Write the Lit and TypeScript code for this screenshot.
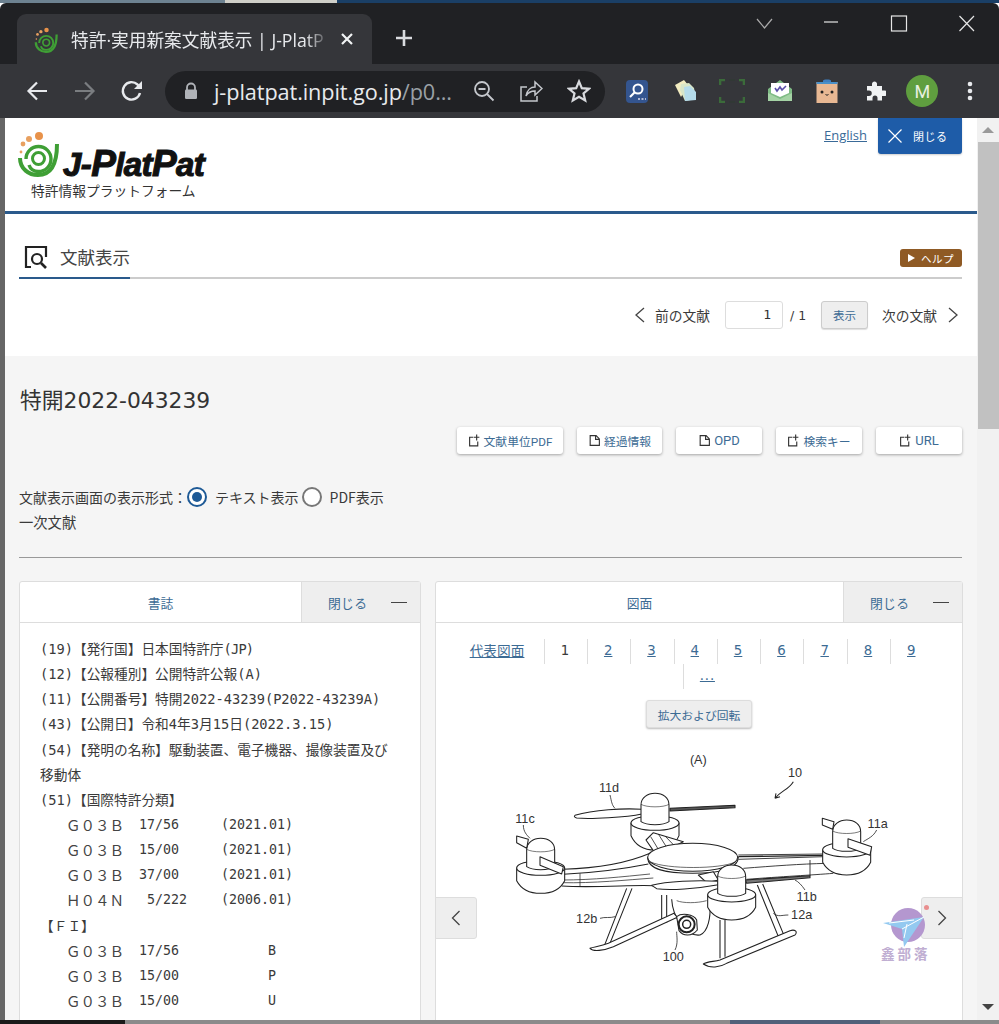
import { LitElement, html, css, svg } from "lit";
import { customElement } from "lit/decorators.js";

const spiral = () => html`<svg viewBox="0 0 42 48" width="100%" height="100%">
  <circle cx="21" cy="7" r="4" fill="#e8924a"/><circle cx="11" cy="10" r="3" fill="#e8a060"/>
  <circle cx="5" cy="15" r="2.4" fill="#e8a060"/><circle cx="3" cy="23" r="1.4" fill="#e8a060"/>
  <g fill="none" stroke="#3f9f35">
    <path d="M2 29C2 40 11 46 20 46C31 46 39 38 39 15" stroke-width="4"/>
    <path d="M8 30a12.5 12.5 0 1 1 12.500 12.500C15 42.500 12 39 11 36" stroke-width="3.400"/>
    <circle cx="20.500" cy="29.500" r="6" stroke-width="3"/>
  </g></svg>`;

const motor = (x: number, y: number, h = 120) => svg`<g transform="translate(${x} ${y})" fill="#fff" stroke="#222" stroke-width="3.200">
  <path d="M-72 44V82C-55 ${h - 6} -25 ${h} 0 ${h}C28 ${h} 58 ${h - 10} 72 82V44Z"/>
  <ellipse cx="0" cy="44" rx="72" ry="22"/>
  <path d="M-42 -10C-42 -32 -22 -45 0 -45C24 -45 42 -32 42 -10V40C25 52 -25 52 -42 40Z"/>
  <path d="M-42 -12C-25 -2 25 -2 42 -12" fill="none" stroke-width="1.800"/>
</g>`;

const drone = () => html`<svg class="drone" viewBox="0 0 1260 720" width="420" height="240">
  <g fill="none" stroke="#222" stroke-width="3.200" stroke-linejoin="round">
    <path d="M285 226C340 210 430 204 485 208V222C440 232 330 238 290 234C282 232 282 228 285 226Z" fill="#fff"/>
    <path d="M570 205L765 196V203L570 213Z" fill="#555"/>
    ${motor(525, 205, 125)}
    <path d="M498 300L520 278L610 305L560 330L520 332Z" fill="#fff"/>
    <path d="M512 290L535 328M535 282L560 322M555 288L582 316" stroke-width="2.400"/>
    <path d="M250 388C350 385 440 370 510 340M250 403C350 398 440 385 505 372M245 438C350 445 480 432 530 438" fill="#fff"/>
    <path d="M245 420C340 420 430 410 510 402M245 428C340 430 440 420 520 414M300 400V440" stroke-width="2.200"/>
    <path d="M775 345L1032 342M775 358L1032 350M800 418C900 410 1000 405 1060 400M990 360V408M790 385C880 378 960 372 1040 370" stroke-width="2.600"/>
    <path d="M775 350L1032 346" stroke-width="4"/>
    <path d="M503 352C503 390 560 400 638 400C720 400 775 385 775 352Z" fill="#fff"/>
    <ellipse cx="638" cy="352" rx="135" ry="42" fill="#fff"/>
    <path d="M512 366C560 388 720 388 766 366" stroke-width="2"/>
    <path d="M795 420L990 407V413L800 430Z" fill="#777"/>
    <path d="M655 405L700 395L715 420L680 428Z" fill="#fff"/>
    <path d="M545 465V552M560 465V548" />
    <path d="M575 478C578 530 615 590 660 585C685 575 692 530 690 495" fill="#fff"/>
    <path d="M590 482C610 490 650 490 680 482" stroke-width="2"/>
    <path d="M440 445L370 625M456 445L386 620" />
    <path d="M330 625C340 636 370 632 400 620L592 532L582 520L385 610C360 620 340 620 330 625Z" fill="#fff"/>
    <path d="M590 530C605 518 640 522 650 540L652 570C635 590 610 590 597 572Z" fill="#fff"/>
    <circle cx="620" cy="553" r="24" stroke-width="6" fill="#fff"/>
    <circle cx="620" cy="553" r="12" stroke-width="4.500"/>
    <path d="M832 435L900 602M848 432L916 596" />
    <path d="M720 540V655M735 540V650" />
    <path d="M670 672C690 686 720 682 740 670L945 585C954 575 945 567 930 572L720 660C700 665 680 665 670 672Z" fill="#fff"/>
    <path d="M515 436C560 424 650 420 715 424V434C650 446 570 452 530 446Z" fill="#fff"/>
    ${motor(182, 340)}
    <path d="M180 350L250 380L245 402L180 376Z" fill="#fff"/>
    <path d="M110 288L145 298L140 325L110 308Z" fill="#fff"/>
    ${motor(1100, 285)}
    <path d="M1104 296L1175 320L1170 346L1104 322Z" fill="#fff"/>
    <path d="M1027 235L1062 245L1058 268L1027 255Z" fill="#fff"/>
    ${motor(755, 420)}
    <path d="M940 125C925 150 905 150 885 175M885 175L888 160M885 175L900 170" />
    <path d="M390 165C395 185 395 195 405 205M130 255C130 275 140 285 150 295M1190 270C1180 290 1165 295 1150 305M975 450C965 435 955 425 945 420M925 525C905 525 895 532 880 520M360 535C375 530 390 535 405 530M585 630C595 610 590 590 590 575" stroke-width="2.400"/>
  </g>
  <g class="dl" font-size="38" fill="#333" text-anchor="middle">
    <text x="655" y="72">(A)</text><text x="945" y="112">10</text><text x="387" y="157">11d</text>
    <text x="135" y="249">11c</text><text x="1193" y="264">11a</text><text x="980" y="484">11b</text>
    <text x="320" y="550">12b</text><text x="965" y="537">12a</text><text x="580" y="664">100</text>
  </g></svg>`;

const docIcon = () => html`<svg viewBox="0 0 12 12" width="13" height="13"><path d="M2 1.500H7.500L10.500 4.500V10.500H2ZM7 1.500V5H10.500" fill="none" stroke="#333" stroke-width="1.050"/></svg>`;
const extIcon = () => html`<svg viewBox="0 0 12 12" width="13" height="13"><path d="M5 3H1.500V11H9V7M8 .5V6M5.500 3H10.500" fill="none" stroke="#333" stroke-width="1.050"/></svg>`;

const cls = [["Ｇ０３Ｂ", "17/56", "(2021.01)"], ["Ｇ０３Ｂ", "15/00", "(2021.01)"], ["Ｇ０３Ｂ", "37/00", "(2021.01)"], ["Ｈ０４Ｎ", " 5/222", "(2006.01)"]];
const fi = [["Ｇ０３Ｂ", "17/56", "B"], ["Ｇ０３Ｂ", "15/00", "P"], ["Ｇ０３Ｂ", "15/00", "U"]];

@customElement("app-root")
export class AppRoot extends LitElement {
  static styles = css`
    :host { display: block; width: 999px; height: 1024px; overflow: hidden; position: relative; font-family: "Noto Sans CJK JP", sans-serif; color: #3a3a3a; }
    * { box-sizing: border-box; }
    svg { display: block; flex: none; }
    .strip { height: 3px; background: linear-gradient(90deg, #6d8291 0 225px, #cfcfc8 225px 337px, #1a3f66 337px); }
    .tabbar { height: 61px; background: #202124; display: flex; padding-left: 17px; border-radius: 6px 6px 0 0; position: relative; }
    .tab { width: 355px; height: 50px; margin-top: 11px; background: #35363a; border-radius: 9px 9px 0 0; display: flex; align-items: center; padding-left: 17px; color: #e8eaed; }
    .fav { width: 25px; height: 27px; margin-right: 12px; flex: none; }
    .tab-title { width: 259px; white-space: nowrap; overflow: hidden; font-size: 17.700px; -webkit-mask-image: linear-gradient(90deg, #000 235px, transparent 259px); mask-image: linear-gradient(90deg, #000 235px, transparent 259px); font-family: "Open Sans", "Noto Sans CJK JP", sans-serif; }
    .tab-x { margin-left: 10px; }
    .plus { margin: 11px 0 0 23px; height: 50px; display: flex; align-items: center; }
    .winctl { position: absolute; right: 0; top: 0; width: 999px; height: 61px; pointer-events: none; }
    .toolbar { height: 54px; background: #35363a; display: flex; align-items: center; padding-left: 13.500px; }
    .ib { width: 47.500px; height: 40px; display: flex; align-items: center; justify-content: center; flex: none; }
    .pill { width: 440px; height: 41px; margin: 0 8.500px 0 9px; border-radius: 21px; background: #202124; display: flex; align-items: center; padding: 0 3px 0 17px; }
    .url { width: 246px; flex: none; font-family: "Open Sans", sans-serif; font-size: 21.700px; color: #e8eaed; margin-left: 14px; white-space: nowrap; letter-spacing: -.1px; }
    .url span { color: #9aa0a6; }
    .avatar { width: 32px; height: 32px; border-radius: 50%; background: #5f9e3f; color: #e8f0e0; display: flex; align-items: center; justify-content: center; font: 18px "Roboto", sans-serif; }
    .page { height: 902px; display: flex; overflow: hidden; position: relative; }
    .edge { width: 5px; background: #666; flex: none; }
    .content { width: 972px; flex: none; background: #f5f5f5; overflow: hidden; position: relative; }
    .sb { width: 22px; flex: none; background: #f1f1f1; display: flex; flex-direction: column; align-items: center; padding-top: 9px; position: relative; }
    .thumb { width: 21px; height: 287px; margin-top: 9px; margin-left: 1px; background: #c1c1c1; }
    .tri-u { width: 0; height: 0; border: 6px solid transparent; border-top: 0; border-bottom: 6px solid #999; }
    .tri-d { position: absolute; bottom: 10px; width: 0; height: 0; border: 6px solid transparent; border-bottom: 0; border-top: 6px solid #444; }
    .head { background: #fff; height: 238px; }
    .brand { height: 93px; display: flex; justify-content: space-between; padding: 0 15px 0 13px; border-bottom: 0; }
    .logo { padding-top: 11px; width: 240px; }
    .logo-top { display: flex; align-items: flex-start; height: 49px; }
    .logo-ic { width: 42px; height: 48px; }
    .wm { font: italic 700 33px/1 "Liberation Sans", sans-serif; color: #111; -webkit-text-stroke: 1.100px #111; margin: 16px 0 0 3px; letter-spacing: -.6px; white-space: nowrap; }
    .wm b { font-size: 37px; font-weight: 700; }
    .sub { font-size: 13.750px; margin: 2px 0 0 13px; color: #333; white-space: nowrap; line-height: 20px; }
    .top-r { display: flex; align-items: flex-start; }
    .en { color: #3a6a98; font: 13px/1 "Open Sans", sans-serif; text-decoration: underline; margin: 11px 11px 0 0; }
    .close { width: 84px; height: 36px; background: #1e5ca8; border-radius: 0 0 3px 3px; color: #fff; display: flex; align-items: center; padding-left: 9px; gap: 10px; font-size: 11px; letter-spacing: .5px; box-shadow: 0 1px 2px #0003; }
    .rule { height: 3px; background: #2a5a8c; }
    .tabs { margin: 26px 15px 0 14px; height: 39px; border-bottom: 2px solid #ccc; display: flex; justify-content: space-between; position: relative; }
    .tab-on { width: 111px; height: 39px; border-bottom: 2px solid #2a5a8c; display: flex; align-items: center; gap: 12px; font-size: 17.500px; padding: 0 0 4px 5px; color: #444; white-space: nowrap; }
    .help { width: 62px; height: 18px; margin-top: 9px; background: #8f5a24; border-radius: 3px; color: #fff; font-size: 10.500px; display: flex; align-items: center; justify-content: center; gap: 6px; letter-spacing: .5px; }
    .help i { width: 0; height: 0; border-left: 7px solid #fff; border-top: 4px solid transparent; border-bottom: 4px solid transparent; }
    .pager { display: flex; justify-content: flex-end; align-items: center; padding: 22px 18px 0 0; height: 50px; font-size: 13.750px; white-space: nowrap; }
    .num { width: 58px; height: 28px; background: #fff; border: 1px solid #ddd; border-radius: 3px; margin: 0 7px 0 15px; font: 13px/26px "DejaVu Sans Mono", monospace; text-align: right; padding-right: 11px; color: #333; }
    .pg { font: 12.500px "DejaVu Sans", sans-serif; width: 16px; white-space: nowrap; }
    .show { width: 47px; height: 28px; margin: 0 14px 0 15px; background: #eee; border: 1px solid #ccc; border-radius: 3px; font-size: 11.500px; color: #3c6b94; display: flex; align-items: center; justify-content: center; box-shadow: 0 1px 1px #0002; }
    .gray { padding: 29px 15px 0 14px; }
    h1 { margin: 0 0 0 1px; font: 400 21.800px/32px "DejaVu Sans", "Noto Sans CJK JP", sans-serif; color: #333; height: 30px; }
    .btns { margin-top: 12px; height: 27px; display: flex; justify-content: flex-end; gap: 14px; }
    .btn { height: 27px; background: #fff; border-radius: 3px; box-shadow: 0 1px 3px #0005; display: flex; align-items: center; justify-content: center; gap: 3px; color: #3c6b94; font: 11.800px "Roboto", "Noto Sans CJK JP", sans-serif; white-space: nowrap; }
    .btn.lat { font-size: 13px; }
    .radios { margin-top: 31px; height: 24px; display: flex; align-items: center; font-size: 14px; white-space: nowrap; }
    .radio { width: 20px; height: 20px; border-radius: 50%; border: 2px solid #777; background: #fff; margin: 0 8px 0 3px; flex: none; display: flex; align-items: center; justify-content: center; }
    .radio.on { border-color: #1e5a96; }
    .radio.on i { width: 10px; height: 10px; border-radius: 50%; background: #1e5a96; }
    .prim { height: 24px; margin-top: 1px; font-size: 14.300px; line-height: 24px; }
    hr { margin: 23px 0 23px; border: 0; border-top: 1px solid #999; }
    .cols { display: flex; gap: 14px; align-items: flex-start; }
    .panel { background: #fff; border: 1px solid #ddd; border-radius: 3px 3px 0 0; height: 600px; flex: none; }
    .p-head { height: 41px; display: flex; border-bottom: 1px solid #ddd; color: #3c6b94; font-size: 12.800px; }
    .p-title { flex: 1; display: flex; align-items: center; justify-content: center; }
    .p-close { width: 119px; background: #eee; border-left: 1px solid #ddd; display: flex; align-items: center; padding-left: 26px; gap: 24px; letter-spacing: .3px; }
    .p-close i { width: 16px; height: 1px; background: #444; }
    .biblio { padding: 13px 20px; font: 13.700px/25.150px "Noto Sans CJK JP", sans-serif; color: #3a3a3a; white-space: nowrap; }
    .biblio > div { height: 25.150px; }
    .biblio s { text-decoration: none; font: 13.700px/1 "DejaVu Sans Mono", monospace; }
    .biblio s.t { letter-spacing: -.8px; }
    .row { display: grid; grid-template-columns: 73px 82px 1fr; padding-left: 26px; white-space: pre; font: 13.300px/25.150px "DejaVu Sans Mono", monospace; }
    .row b { font: 400 14.500px/25.150px "Noto Sans CJK JP", sans-serif; color: #444; }
    .row .f { padding-left: 47px; }
    .figs { display: flex; flex-direction: column; align-items: center; position: relative; }
    .nav { width: 500px; margin: 16px 0 0 5px; display: flex; flex-wrap: wrap; justify-content: center; font: 13.300px/24px "DejaVu Sans", "Noto Sans CJK JP", sans-serif; }
    .nav a { color: #3c6b94; text-decoration: underline; }
    .nav div { height: 25px; padding-left: 16px; border-left: 1px solid #ddd; width: 43.300px; }
    .nav div:first-child { border-left: 0; padding: 0; width: 74px; font-size: 13.700px; }
    .nav div.more { margin-left: 6px; letter-spacing: .8px; }
    .zoomb { margin-top: 11px; width: 106px; height: 28px; background: #eee; border: 1px solid #ddd; border-radius: 3px; box-shadow: 0 1px 2px #0004; color: #3c6b94; font-size: 11.800px; display: flex; align-items: center; justify-content: center; }
    .drone { margin: 12px 0 0 -18px; }
    .dl { font-family: "Liberation Sans", sans-serif; }
    .car { position: absolute; top: 274px; width: 42px; height: 42px; background: #eee; border: 1px solid #ddd; display: flex; align-items: center; justify-content: center; }
    .car.l { left: -1px; border-radius: 0 3px 3px 0; }
    .car.r { right: -1px; border-radius: 3px 0 0 3px; }
    .car.r::before { content: ""; position: absolute; left: 2px; top: 7px; width: 5px; height: 5px; border-radius: 50%; background: #e98f8f; }
    .mark { position: absolute; left: 445px; top: 285px; width: 52px; color: #c0aed2; font-size: 13.500px; letter-spacing: 3px; white-space: nowrap; line-height: 16px; font-weight: 700; }
    .mark svg { margin: 0 0 -7px 2px; }
    .bottom { height: 4px; background: linear-gradient(90deg, #1a1a1a 0 125px, #8b8b8b 125px 730px, #51617a 730px 880px, #8b8b8b 880px); }
  `;

  render() {
    const stroke = "#e8eaed";
    return html`
      <div class="strip"></div>
      <div class="tabbar">
        <div class="tab">
          <div class="fav">${spiral()}</div>
          <div class="tab-title">特許·実用新案文献表示 | J-PlatP</div>
          <svg class="tab-x" viewBox="0 0 14 14" width="14" height="14"><path d="M2 2L12 12M12 2L2 12" stroke="#f1f3f4" stroke-width="2.200"/></svg>
        </div>
        <div class="plus"><svg viewBox="0 0 18 18" width="18" height="18" style="margin-top:-3px"><path d="M9 1V17M1 9H17" stroke="#dadce0" stroke-width="2.600"/></svg></div>
        <svg class="winctl" viewBox="0 0 999 61"><g fill="none" stroke="#e6e6e6" stroke-width="1.200">
          <path d="M757 16L764.500 25L772 16" stroke="#aaa"/><path d="M824 19H838"/><rect x="891.500" y="13" width="15" height="15"/><path d="M959.500 13L974 28M974 13L959.500 28"/></g></svg>
      </div>
      <div class="toolbar">
        <div class="ib"><svg viewBox="0 0 22 22" width="22" height="22"><path d="M21 11H3M11 2.500L2.500 11L11 19.500" fill="none" stroke="${stroke}" stroke-width="2.200"/></svg></div>
        <div class="ib"><svg viewBox="0 0 22 22" width="22" height="22"><path d="M1 11H19M11 2.500L19.500 11L11 19.500" fill="none" stroke="#7a7d80" stroke-width="2.200"/></svg></div>
        <div class="ib"><svg viewBox="0 0 24 24" width="24" height="24"><path d="M20 14A8.700 8.700 0 1 1 17.500 5.500L21 9" fill="none" stroke="${stroke}" stroke-width="2.400"/><path d="M22 2V10H14Z" fill="${stroke}"/></svg></div>
        <div class="pill">
          <svg viewBox="0 0 18 18" width="18" height="18"><path d="M5 8V5.500a4 4 0 0 1 8 0V8" fill="none" stroke="#b0b3b8" stroke-width="1.800"/><rect x="3" y="7.500" width="12" height="9.500" rx="1.200" fill="#b0b3b8"/></svg>
          <div class="url">j-platpat.inpit.go.jp<span>/p0...</span></div>
          <div class="ib"><svg viewBox="0 0 22 22" width="22" height="22"><circle cx="9" cy="9" r="7" fill="none" stroke="#c4c7cc" stroke-width="1.800"/><path d="M14 14L20.500 20.500M5.500 9H12.500" stroke="#c4c7cc" stroke-width="1.800"/></svg></div>
          <div class="ib"><svg viewBox="0 0 24 24" width="24" height="24"><path d="M8 8H2V22H18V17M7 17C8 11 12 8 16 8V3L23 9.500L16 16V12C12 12 9 13.500 7 17Z" fill="none" stroke="#c4c7cc" stroke-width="1.500"/></svg></div>
          <div class="ib"><svg viewBox="0 0 24 24" width="24" height="24"><path d="M12 2.500L14.800 9.200L22 9.800L16.500 14.500L18.200 21.500L12 17.800L5.800 21.500L7.500 14.500L2 9.800L9.200 9.200Z" fill="none" stroke="#d8dade" stroke-width="2.200"/></svg></div>
        </div>
        <div class="ib"><svg viewBox="0 0 24 24" width="24" height="24"><rect x="1" y="1" width="22" height="23" rx="4" fill="#34558f"/><circle cx="13" cy="10" r="4.500" fill="none" stroke="#fff" stroke-width="2"/><path d="M9.500 13.500L5 18" stroke="#fff" stroke-width="2.200"/><path d="M13 20h2M16.500 20h2M20 20h1" stroke="#dde" stroke-width="1.500"/></svg></div>
        <div class="ib"><svg viewBox="0 0 24 24" width="24" height="24"><path d="M2 6L11 1L15 6L8 18Z" fill="#f2ecc0"/><path d="M8 5L16 4L21 9L23 20L12 22L7 11Z" fill="#d8e6c8"/><path d="M11 8L17 7L23 13V21L12 22Z" fill="#b5dceb"/></svg></div>
        <div class="ib"><svg viewBox="0 0 26 24" width="26" height="24"><path d="M1 6V1H6M20 1H25V6M25 18V23H20M6 23H1V18" fill="none" stroke="#3b6b3a" stroke-width="2.600"/><path d="M10 1H16M10 23H16" stroke="#2f3a30" stroke-width="1"/></svg></div>
        <div class="ib"><svg viewBox="0 0 26 24" width="26" height="24"><path d="M1 10L13 1L25 10V22H1Z" fill="#7fbb85"/><path d="M4 4H22V14L13 18L4 14Z" fill="#fff"/><path d="M8 9L10 12L13 8L15 11L19 7" fill="none" stroke="#5a50a8" stroke-width="1.600"/><path d="M1 14L13 20L25 14V22H1Z" fill="#a5d3a5"/></svg></div>
        <div class="ib"><svg viewBox="0 0 24 26" width="24" height="26"><rect x="1.500" y="4" width="21" height="21" fill="#e8b893"/><path d="M8 5V2.500C8 1 16 1 16 2.500V5Z" fill="#3f7fc0"/><rect x="1.500" y="4" width="21" height="2" fill="#4a90c8"/><circle cx="7" cy="14" r="1.500" fill="#222"/><circle cx="17" cy="14" r="1.500" fill="#222"/><path d="M10.500 16.500Q12 18 13.500 16.500" fill="none" stroke="#222"/></svg></div>
        <div class="ib"><svg viewBox="0 0 22 22" width="22" height="22"><path d="M8 3.500a2.600 2.600 0 0 1 5 0V6H18V10.500H20.500a2.700 2.700 0 0 1 0 5.500H18V20.500H13.500V18a2.500 2.500 0 0 0-5 0V20.500H3V16H5a2.700 2.700 0 0 0 0-5.500H3V6H8Z" fill="#f1f3f4"/></svg></div>
        <div class="ib"><div class="avatar">M</div></div>
        <div class="ib"><svg viewBox="0 0 6 22" width="6" height="22"><circle cx="3" cy="4" r="2.300" fill="#e8eaed"/><circle cx="3" cy="11" r="2.300" fill="#e8eaed"/><circle cx="3" cy="18" r="2.300" fill="#e8eaed"/></svg></div>
      </div>
      <div class="page">
        <div class="edge"></div>
        <div class="content">
          <div class="head">
            <div class="brand">
              <div class="logo">
                <div class="logo-top"><div class="logo-ic">${spiral()}</div><div class="wm">J-<b>P</b>lat<b>P</b>at</div></div>
                <div class="sub">特許情報プラットフォーム</div>
              </div>
              <div class="top-r"><a class="en">English</a>
                <div class="close"><svg viewBox="0 0 16 16" width="16" height="16"><path d="M1.500 1.500L14.500 14.500M14.500 1.500L1.500 14.500" stroke="#fff" stroke-width="1.200"/></svg>閉じる</div></div>
            </div>
            <div class="rule"></div>
            <div class="tabs">
              <div class="tab-on"><svg viewBox="0 0 24 24" width="24" height="24"><path d="M7 22H2V2H22V12" fill="none" stroke="#222" stroke-width="2.200"/><circle cx="13" cy="14" r="5" fill="none" stroke="#222" stroke-width="2.200"/><path d="M17 18L22 23" stroke="#222" stroke-width="2.600"/></svg>文献表示</div>
              <div class="help"><i></i><span>ヘルプ</span></div>
            </div>
            <div class="pager">
              <svg viewBox="0 0 12 16" width="12" height="16" style="margin-right:9px"><path d="M10 1L2 8L10 15" fill="none" stroke="#444" stroke-width="1.300"/></svg>
              前の文献
              <div class="num">1</div><span class="pg">/ 1</span>
              <div class="show">表示</div>
              次の文献
              <svg viewBox="0 0 12 16" width="12" height="16" style="margin-left:10px"><path d="M2 1L10 8L2 15" fill="none" stroke="#444" stroke-width="1.300"/></svg>
            </div>
          </div>
          <div class="gray">
            <h1>特開2022-043239</h1>
            <div class="btns">
              <div class="btn" style="width:106px">${extIcon()}文献単位PDF</div>
              <div class="btn" style="width:85px">${docIcon()}経過情報</div>
              <div class="btn lat" style="width:86px">${docIcon()}OPD</div>
              <div class="btn" style="width:86px">${extIcon()}検索キー</div>
              <div class="btn lat" style="width:86px">${extIcon()}URL</div>
            </div>
            <div class="radios">文献表示画面の表示形式：<span class="radio on" style="margin-left:0"><i></i></span>テキスト表示<span class="radio" style="margin-left:3px"></span>PDF表示</div>
            <div class="prim">一次文献</div>
            <hr />
            <div class="cols">
              <div class="panel" style="width:402px">
                <div class="p-head"><div class="p-title">書誌</div><div class="p-close">閉じる<i></i></div></div>
                <div class="biblio">
                  <div><s>(19)</s>【発行国】日本国特許庁<s class="t">(JP)</s></div>
                  <div><s>(12)</s>【公報種別】公開特許公報<s>(A)</s></div>
                  <div><s>(11)</s>【公開番号】特開<s>2022-43239(P2022-43239A)</s></div>
                  <div><s>(43)</s>【公開日】令和<s>4</s>年<s>3</s>月<s>15</s>日<s>(2022.3.15)</s></div>
                  <div><s>(54)</s>【発明の名称】駆動装置、電子機器、撮像装置及び</div>
                  <div>移動体</div>
                  <div><s>(51)</s>【国際特許分類】</div>
                  ${cls.map((r) => html`<div class="row"><b>${r[0]}</b><span>${r[1]}</span><span>${r[2]}</span></div>`)}
                  <div>【ＦＩ】</div>
                  ${fi.map((r) => html`<div class="row"><b>${r[0]}</b><span>${r[1]}</span><span class="f">${r[2]}</span></div>`)}
                </div>
              </div>
              <div class="panel" style="width:528px">
                <div class="p-head"><div class="p-title">図面</div><div class="p-close">閉じる<i></i></div></div>
                <div class="figs">
                  <div class="nav">
                    <div><a>代表図面</a></div><div>1</div>
                    ${[2, 3, 4, 5, 6, 7, 8, 9].map((n) => html`<div><a>${n}</a></div>`)}
                    <div class="more"><a>...</a></div>
                  </div>
                  <div class="zoomb">拡大および回転</div>
                  ${drone()}
                  <div class="car l"><svg viewBox="0 0 10 16" width="10" height="16"><path d="M8.500 1L1.500 8L8.500 15" fill="none" stroke="#444" stroke-width="1.300"/></svg></div>
                  <div class="car r"><svg viewBox="0 0 10 16" width="10" height="16"><path d="M1.500 1L8.500 8L1.500 15" fill="none" stroke="#444" stroke-width="1.300"/></svg></div>
                  <div class="mark"><svg viewBox="0 0 46 44" width="46" height="44"><circle cx="25" cy="17" r="17" fill="#b497cf"/><path d="M0 15L41 9L21 39L19 21Z" fill="#93c9f0"/><path d="M19 21L41 9M6 15L31 12M24 16L21 30" stroke="#fff" stroke-width="1" fill="none"/></svg>鑫部落</div>
                </div>
              </div>
            </div>
          </div>
        </div>
        <div class="sb"><div class="tri-u"></div><div class="thumb"></div><div class="tri-d"></div></div>
      </div>
      <div class="bottom"></div>
    `;
  }
}
